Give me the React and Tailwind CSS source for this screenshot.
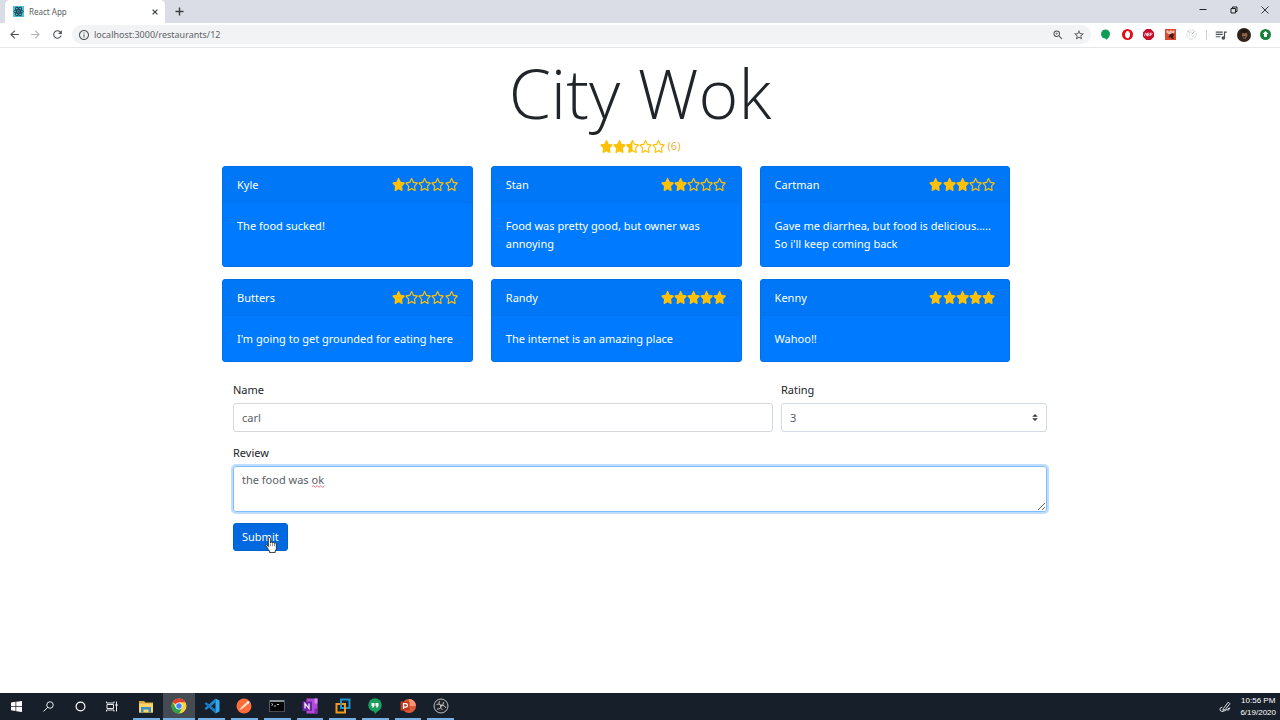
import { useState } from "react";
import { FaStar, FaRegStar, FaStarHalfAlt } from "react-icons/fa";
import { MdArrowBack, MdArrowForward, MdRefresh, MdInfoOutline, MdOutlineZoomIn, MdStarBorder, MdOutlineQueueMusic } from "react-icons/md";

const reviews = [
  { name: "Kyle", rating: 1, text: "The food sucked!" },
  { name: "Stan", rating: 2, text: "Food was pretty good, but owner was annoying" },
  { name: "Cartman", rating: 3, text: "Gave me diarrhea, but food is delicious..... So i'll keep coming back" },
  { name: "Butters", rating: 1, text: "I'm going to get grounded for eating here" },
  { name: "Randy", rating: 5, text: "The internet is an amazing place" },
  { name: "Kenny", rating: 5, text: "Wahoo!!" },
];

function Stars({ rating, className }) {
  return (
    <span className={"flex text-[#ffc107] " + className} role="img" aria-label={rating + " out of 5 stars"}>
      {[1, 2, 3, 4, 5].map((n) => {
        const Icon = n <= rating ? FaStar : n - 0.5 <= rating ? FaStarHalfAlt : FaRegStar;
        return <Icon key={n} className="h-[13px] min-w-0 flex-1" preserveAspectRatio="none" />;
      })}
    </span>
  );
}

function ReactMark() {
  return (
    <svg viewBox="0 0 22 22" className="size-[11px] shrink-0" aria-hidden="true">
      <rect width="22" height="22" fill="#53c1de" />
      <g fill="none" stroke="#1b3a47" strokeWidth="1.8">
        <ellipse cx="11" cy="11" rx="9.5" ry="3.7" />
        <ellipse cx="11" cy="11" rx="9.5" ry="3.7" transform="rotate(60 11 11)" />
        <ellipse cx="11" cy="11" rx="9.5" ry="3.7" transform="rotate(120 11 11)" />
      </g>
      <circle cx="11" cy="11" r="2" fill="#1b3a47" />
    </svg>
  );
}

function TabStrip() {
  return (
    <div className="flex h-[23px] items-end bg-[#dadde6]">
      <div className="ml-[5px] flex h-[23px] w-40 items-center rounded-t-[5px] bg-white pr-1 pl-2">
        <ReactMark />
        <span className="ml-[5px] flex-1 font-['Noto_Sans',sans-serif] text-[8px] text-[#5a5d61]">React App</span>
        <button type="button" aria-label="Close tab" className="flex size-3 items-center justify-center">
          <svg viewBox="0 0 10 10" className="size-[6px]" stroke="#3c4043" strokeWidth="2"><path d="M1 1l8 8M9 1l-8 8" /></svg>
        </button>
      </div>
      <button type="button" aria-label="New tab" className="ml-2 flex h-[23px] w-3 items-center justify-center">
        <svg viewBox="0 0 9 9" className="size-[9px]" stroke="#3c4043" strokeWidth="1.400"><path d="M4.500 .5v8M.5 4.500h8" /></svg>
      </button>
      <div className="ml-auto flex h-full items-center pb-[3px]">
        <button type="button" aria-label="Minimize" className="flex w-[31px] justify-center">
          <svg viewBox="0 0 8 8" className="size-2" stroke="#222"><path d="M.5 3.500h7" /></svg>
        </button>
        <button type="button" aria-label="Restore" className="flex w-[31px] justify-center">
          <svg viewBox="0 0 8 8" className="size-2" fill="none" stroke="#222"><path d="M1 2.500h4.500v4.500H1zM2.500 2.500V1H7v4.500H5.500" /></svg>
        </button>
        <button type="button" aria-label="Close" className="flex w-[31px] justify-center">
          <svg viewBox="0 0 8 8" className="size-2" stroke="#222" strokeWidth="0.9"><path d="M.5.5l7 7M7.500.5l-7 7" /></svg>
        </button>
      </div>
    </div>
  );
}

function Extensions() {
  return (
    <div className="flex w-[97px] items-center justify-between">
      <svg viewBox="0 0 22 22" className="size-[11px]"><circle cx="11" cy="10" r="9" fill="#0f9d58" /><path d="M11 17h7l-6 5z" fill="#0f9d58" /></svg>
      <svg viewBox="0 0 22 22" className="size-[11px]">
        <circle cx="11" cy="11" r="11" fill="#de0d17" />
        <path d="M6 11V7.500h2V5h2V4h2.500v1h2v2.500H16V14l-3 4.500H9.500L6 14z" fill="#fff" />
      </svg>
      <svg viewBox="0 0 22 22" className="size-[11px]">
        <path d="M6.500 0h9L22 6.500v9L15.500 22h-9L0 15.500v-9z" fill="#c70d2c" />
        <path d="M3 14l2-6h1l2 6M9 14V8h2.500q1.500 1.500 0 3H9M11 11q3 1 0 3H9M14.500 14V8H17q2.500 1.500 0 3.500h-2.500" fill="none" stroke="#fff" strokeWidth="1.5" />
      </svg>
      <svg viewBox="0 0 22 22" className="size-[11px]">
        <rect width="22" height="22" fill="#dc4a30" />
        <path d="M2 5l3-3 3 3 3-3 4 2 4-2v5l-4 3-7 1-4-3z" fill="#eebcaf" />
        <path d="M9 11l6-3 4 4-3 3 2 5h-4l-4-4-3 2z" fill="#47201c" />
      </svg>
      <svg viewBox="0 0 22 22" className="size-[11px]" fill="none" stroke="#c3c6ca" strokeWidth="1.3">
        <circle cx="11" cy="11" r="9.500" strokeDasharray="9 2" /><circle cx="11" cy="11" r="5" strokeDasharray="7 3" /><path d="M11 11l6-6M3 4l4 3" stroke="#8b8f94" />
      </svg>
    </div>
  );
}

function AddressBar() {
  return (
    <div className="flex h-[25px] items-center border-b border-[#e4e6e8] bg-white pr-[9px] pb-px text-[#4d5156]">
      <button type="button" aria-label="Back" className="flex w-[21px] justify-end"><MdArrowBack className="size-[13px]" /></button>
      <button type="button" aria-label="Forward" className="flex w-[21px] justify-end text-[#b0b3b7]"><MdArrowForward className="size-[13px]" /></button>
      <button type="button" aria-label="Reload" className="flex w-[22px] justify-end"><MdRefresh className="size-[13px]" /></button>
      <div className="ml-2 flex h-[19px] flex-1 items-center rounded-full bg-[#f1f3f4] px-[6px]">
        <MdInfoOutline className="size-3 shrink-0" />
        <input
          aria-label="Address"
          defaultValue="localhost:3000/restaurants/12"
          className="ml-[4px] min-w-0 flex-1 bg-transparent text-[9px] text-[#5f6368] outline-none"
        />
        <MdOutlineZoomIn className="size-3" />
        <MdStarBorder className="ml-[9px] size-3" />
      </div>
      <div className="ml-[9px] flex items-center">
        <Extensions />
        <span className="ml-[9px] h-[10px] w-px bg-[#c9ccd1]" />
        <MdOutlineQueueMusic className="ml-[7px] size-[14px]" />
        <svg viewBox="0 0 28 28" className="ml-[9px] size-[14px]">
          <circle cx="14" cy="14" r="14" fill="#30231c" />
          <path d="M11 9l8-1 2 7-4 7-4-1-3-6z" fill="#8f6544" />
          <path d="M7 14l3-5 5 2 6-3-2-5H9zM12 16l5 1v2h-4z" fill="#1c1715" />
        </svg>
        <svg viewBox="0 0 22 22" className="ml-[9px] size-[11px]"><circle cx="11" cy="11" r="11" fill="#188038" /><path d="M11 4l6 6h-3v6H8v-6H5z" fill="#fff" /></svg>
      </div>
    </div>
  );
}

function ReviewCard({ name, rating, text }) {
  return (
    <article className="rounded-[3px] border border-[#0070e8] bg-[#007bff] text-white">
      <header className="flex h-9 items-center justify-between border-b border-[#0073ee] bg-[#0077f7] px-[14px]">
        <span>{name}</span>
        <Stars rating={rating} className="w-[66px]" />
      </header>
      <p className="px-[14px] pt-[14px] pb-[13px]">{text}</p>
    </article>
  );
}

function ReviewForm() {
  const [name, setName] = useState("carl");
  const [rating, setRating] = useState("3");
  const [review, setReview] = useState("the food was ok");
  return (
    <form className="mt-[19px] px-[11px]" onSubmit={(e) => e.preventDefault()}>
      <div className="grid grid-cols-12 gap-2">
        <div className="col-span-8">
          <label htmlFor="name" className="mb-1 block">Name</label>
          <input
            id="name"
            value={name}
            onChange={(e) => setName(e.target.value)}
            className="block h-[29px] w-full rounded-[3px] border border-[#d5d9dd] px-2 text-[#5a6067] outline-none"
          />
        </div>
        <div className="col-span-4">
          <label htmlFor="rating" className="mb-1 block">Rating</label>
          <div className="relative">
            <select
              id="rating"
              value={rating}
              onChange={(e) => setRating(e.target.value)}
              className="block h-[29px] w-full appearance-none rounded-[3px] border border-[#d3dae5] bg-white px-2 text-[#5a6067] outline-none"
            >
              {["1", "2", "3", "4", "5"].map((n) => <option key={n}>{n}</option>)}
            </select>
            <svg viewBox="0 0 4 5" className="pointer-events-none absolute top-[11px] right-[9px] h-[7px] w-[6px]" fill="#343a40"><path d="M2 0L0 2h4zm0 5L0 3h4z" /></svg>
          </div>
        </div>
      </div>
      <label htmlFor="review" className="mt-3 mb-1 block">Review</label>
      <div className="relative">
        <textarea
          id="review"
          spellCheck={false}
          value={review}
          onChange={(e) => setReview(e.target.value)}
          className="block h-[46px] w-full resize-y rounded-[3px] border border-[#80bdff] px-2 py-1 text-[#5a6067] ring-2 ring-[#bfdeff] outline-none"
        />
        <svg viewBox="0 0 14 3" className="pointer-events-none absolute top-[19px] left-[79px] h-[3px] w-[13px]" fill="none" stroke="#e0526a" strokeWidth="0.9">
          <path d="M0 2l1.500-1.500L3.500 2.500l2-2 2 2 2-2 2 2 2-2" />
        </svg>
      </div>
      <div className="relative mt-[11px] inline-block">
        <button type="submit" className="block h-7 rounded-[3px] border border-[#0062cc] bg-[#0069e0] px-2 text-white">Submit</button>
        <svg viewBox="0 0 22 30" className="pointer-events-none absolute top-[14px] left-[32px] h-4 w-3" fill="#fff" stroke="#222" strokeWidth="1.6" strokeLinejoin="round">
          <path d="M6 18V3q0-2 2-2t2 2v8q0-1.500 2-1.500t2 2q0-1.500 1.800-1.500t1.900 2q0-1 1.600-1T21 13v8q0 3-2 5v3H8v-3q-2-2-4-6l-3-4q0-3 3-1z" />
          <path d="M10 12v5M14 12v5M17.700 13v4" strokeWidth="1" />
        </svg>
      </div>
    </form>
  );
}

function SystemIcons() {
  const cell = "flex w-8 items-center justify-center";
  return (
    <div className="flex">
      <button type="button" aria-label="Start" className={cell}>
        <svg viewBox="0 0 22 22" className="size-[11px]" fill="#fff"><path d="M0 3l9-1.300V10H0zM10.500 1.500L22 0v10H10.500zM0 11.500h9V20L0 18.700zM10.500 11.500H22V22l-11.500-1.600z" /></svg>
      </button>
      <button type="button" aria-label="Search" className={cell}>
        <svg viewBox="0 0 22 22" className="size-[11px]" fill="none" stroke="#e6e8ea" strokeWidth="2"><circle cx="14" cy="8" r="6.500" /><path d="M9.500 12.500L1 21" /></svg>
      </button>
      <button type="button" aria-label="Cortana" className={cell}>
        <svg viewBox="0 0 22 22" className="size-[11px]" fill="none" stroke="#fff" strokeWidth="2.400"><circle cx="11" cy="11" r="8.800" /></svg>
      </button>
      <button type="button" aria-label="Task view" className={cell}>
        <svg viewBox="0 0 24 22" className="h-[11px] w-3" fill="none" stroke="#e6e8ea" strokeWidth="2"><path d="M2 7h13v8H2zM1 1v3h15V1M1 21v-3h15v3M21 1v20" /><path d="M19 6h4v4h-4z" fill="#e6e8ea" stroke="none" /></svg>
      </button>
    </div>
  );
}

const apps = [
  {
    name: "File Explorer",
    art: <><path d="M2 6h10l3 3h15v20H2z" fill="#dda73a" /><path d="M2 11h28v18H2z" fill="#fbd667" /><path d="M6 29V18h20v11h-5v-6H11v6z" fill="#3d8fcb" /></>,
  },
  {
    name: "Chrome",
    active: true,
    art: (
      <>
        <circle cx="16" cy="16" r="15" fill="#fdd03f" />
        <path d="M16 16L3 8.500A15 15 0 0 1 29 8.500H16z" fill="#e34133" />
        <path d="M3 8.500A15 15 0 0 0 16 31l6.500-11.200L16 16l-6.500 3.800z" fill="#2ba14b" />
        <circle cx="16" cy="16" r="7" fill="#fff" /><circle cx="16" cy="16" r="5.500" fill="#4285f4" />
      </>
    ),
  },
  {
    name: "Visual Studio Code",
    art: (
      <>
        <path d="M23 1L4 18l-3 2.500L4 24l19-15z" fill="#2088d0" />
        <path d="M23 31L4 14l-3-2.500L4 8l19 15z" fill="#1a78c2" />
        <path d="M23 1l8 4v22l-8 4z" fill="#2fa8ef" />
      </>
    ),
  },
  {
    name: "Postman",
    art: <><circle cx="16" cy="16" r="15" fill="#fb6c38" /><path d="M6 24l7-8 9-8 3 3-8 7-6 4z" fill="#ffe3d5" /><circle cx="24" cy="9" r="2.500" fill="#fff" /></>,
  },
  {
    name: "Command Prompt",
    art: <><path d="M1 4h30v24H1z" fill="#8d9297" /><path d="M2 8h28v19H2z" fill="#050505" /><path d="M5 11l3 2-3 2M10 16h4M16 13h4" fill="none" stroke="#ddd" strokeWidth="1.800" /></>,
  },
  {
    name: "OneNote",
    art: <><path d="M9 1h22v30H9z" fill="#b24bd6" /><path d="M25 1h6v10h-6z" fill="#d18bee" /><path d="M25 21h6v10h-6z" fill="#7f2cb0" /><path d="M1 7h19v19H1z" fill="#6e24a5" /><path d="M6 21V11l8 10V11" fill="none" stroke="#fff" strokeWidth="2.400" /></>,
  },
  {
    name: "VMware",
    art: <><path d="M12 3h17v17H12z" fill="none" stroke="#1b94cc" strokeWidth="4" /><path d="M3 12h17v17H3z" fill="none" stroke="#f3981d" strokeWidth="4" /><path d="M12 10v10h6" fill="none" stroke="#1b94cc" strokeWidth="3.500" /></>,
  },
  {
    name: "Hangouts",
    art: <><circle cx="16" cy="14" r="13.500" fill="#18a05d" /><path d="M13 24h11l-8 8z" fill="#18a05d" /><path d="M9 10h6v6l-2 3h-3l1-3H9zM17 10h6v6l-2 3h-3l1-3h-2z" fill="#fff" /></>,
  },
  {
    name: "PowerPoint",
    art: <><circle cx="18" cy="16" r="14" fill="#df5b37" /><path d="M18 2a14 14 0 0 1 14 14H18z" fill="#ff9270" /><path d="M1 7h18v18H1z" fill="#bd3b20" /><path d="M7 22V11h4q4 0 4 3.500T11 18H7" fill="none" stroke="#fff" strokeWidth="2.500" /></>,
  },
  {
    name: "OBS Studio",
    art: (
      <g fill="none" stroke="#c9ccce" strokeWidth="1.800">
        <circle cx="16" cy="16" r="14" fill="#22262b" />
        <path d="M13 6q-4 6 3 9q6-1 5-7M26 20q-3-7-10-5q-3 6 3 9M8 22q8 1 8-7q-4-5-9-2" />
      </g>
    ),
  },
];

function Taskbar() {
  return (
    <footer className="flex h-[27px] bg-[#17202a] text-white">
      <SystemIcons />
      <div className="ml-[2px] grid w-[327px] grid-cols-10">
        {apps.map((app) => (
          <button
            key={app.name}
            type="button"
            aria-label={app.name}
            className={"flex flex-col items-center justify-end " + (app.active ? "bg-[#454b52]" : "px-[3px]")}
          >
            <svg viewBox="0 0 32 32" className="mb-[4px] size-4">{app.art}</svg>
            <span className="block h-[2px] w-full bg-[#76b0e4]" />
          </button>
        ))}
      </div>
      <div className="ml-auto flex items-center pr-[4px]">
        <svg viewBox="0 0 22 22" className="mr-[9px] size-3" fill="none" stroke="#e6e8ea" strokeWidth="1.800">
          <path d="M8 14L17 2l3 3L11 16l-4 1zM6 11q-6 2-4 6t8 1 9-5-3 5" />
        </svg>
        <div className="text-center font-['Liberation_Sans',sans-serif] text-[8px] leading-3">
          <div>10:56 PM</div>
          <div>6/19/2020</div>
        </div>
      </div>
    </footer>
  );
}

export default function App() {
  return (
    <div className="flex min-h-screen flex-col bg-white font-['Noto_Sans','Open_Sans',sans-serif] text-[11px] leading-[18px] text-[#212529]">
      <TabStrip />
      <AddressBar />
      <main className="mx-auto w-full max-w-[836px] flex-1">
        <h1 className="pt-[3px] text-center font-['Open_Sans','Noto_Sans',sans-serif] text-[68px] leading-[84px] font-light">City Wok</h1>
        <div className="mt-[2px] flex items-center justify-center gap-[3px] text-[#f0b040]">
          <Stars rating={2.5} className="w-[65px]" />
          <span>(6)</span>
        </div>
        <section className="mt-[11px] grid grid-cols-[repeat(3,30%)] gap-x-[18px] gap-y-3">
          {reviews.map((r) => <ReviewCard key={r.name} {...r} />)}
        </section>
        <ReviewForm />
      </main>
      <Taskbar />
    </div>
  );
}
